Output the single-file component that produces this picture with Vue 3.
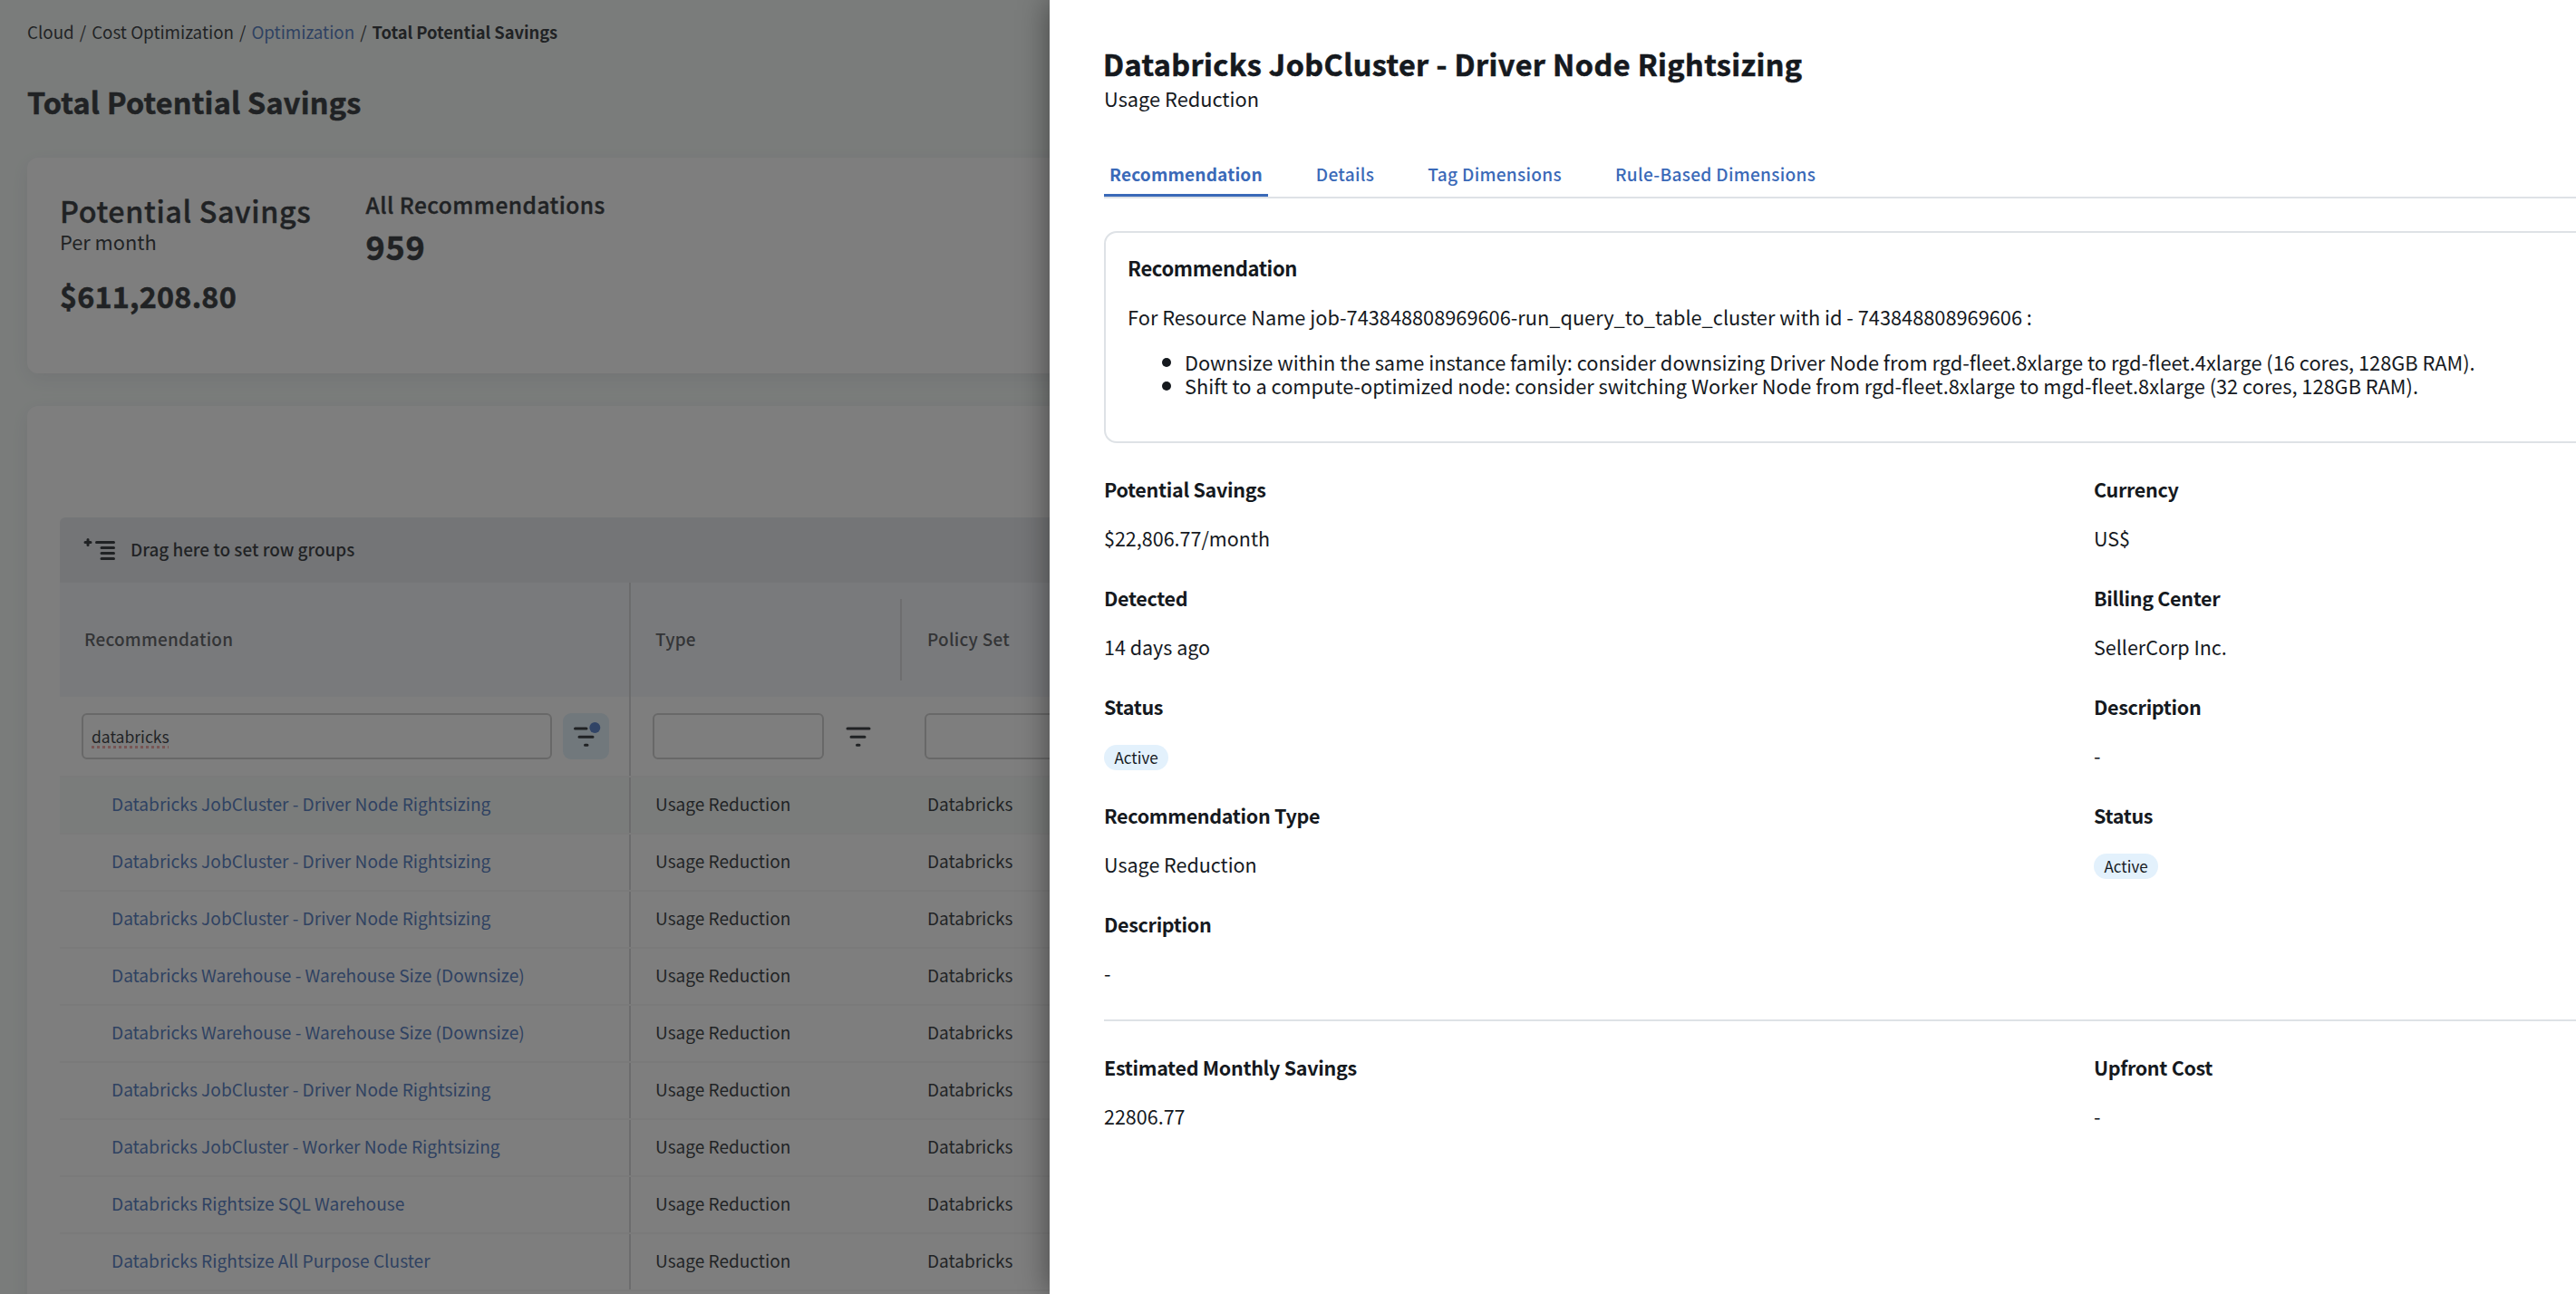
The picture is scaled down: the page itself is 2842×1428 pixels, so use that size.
<template>
  <div class="page">
    <main class="content">
      <nav class="breadcrumb">
        <span>Cloud</span>
        <span>/</span>
        <span>Cost Optimization</span>
        <span>/</span>
        <a class="link">Optimization</a>
        <span>/</span>
        <strong>Total Potential Savings</strong>
      </nav>
      <h1>Total Potential Savings</h1>

      <section class="card summary">
        <div class="summary-main">
          <h2>Potential Savings</h2>
          <p class="period">Per month</p>
          <p class="amount">$611,208.80</p>
        </div>
        <div class="summary-count">
          <h3>All Recommendations</h3>
          <p class="count">959</p>
        </div>
      </section>

      <section class="card table-card">
        <div class="grid">
          <div class="group-bar">
            <svg width="37" height="26" viewBox="0 0 37 26">
              <path d="M2 5.4h6M5 2.4v6M14.5 5.4h19M20 11.4h13.5M20 17.4h13.5M20 23.4h13.5" />
            </svg>
            <span>Drag here to set row groups</span>
          </div>

          <div class="grid-row header-row">
            <div class="col-name"><span>Recommendation</span></div>
            <div class="col-type"><span>Type</span></div>
            <div class="col-policy"><span>Policy Set</span></div>
          </div>

          <div class="grid-row filter-row">
            <div v-for="f in filters" :key="f.col" :class="f.col">
              <div class="filter-input"><span v-if="f.value">{{ f.value }}</span></div>
              <div class="filter-btn" :class="{ active: f.value }">
                <svg width="51" height="51" viewBox="0 0 51 51">
                  <path :d="f.value ? 'M13.5 17h12.5' : 'M14 17h24'" />
                  <path d="M18 26.2h15M24.5 35.2h2.5" />
                  <circle v-if="f.value" cx="35.3" cy="16" r="6" />
                </svg>
              </div>
            </div>
          </div>

          <div
            v-for="(row, i) in rows"
            :key="i"
            class="grid-row data-row"
            :class="{ selected: i === 0 }"
          >
            <div class="col-name"><a class="link">{{ row }}</a></div>
            <div class="col-type"><span>Usage Reduction</span></div>
            <div class="col-policy"><span>Databricks</span></div>
          </div>
        </div>
      </section>
    </main>

    <div class="overlay"></div>

    <aside class="drawer">
      <h2 class="title">Databricks JobCluster - Driver Node Rightsizing</h2>
      <p class="subtitle">Usage Reduction</p>

      <div class="tabs">
        <span v-for="(tab, i) in tabs" :key="tab" class="tab" :class="{ current: i === 0 }">{{ tab }}</span>
      </div>

      <div class="box">
        <h4>Recommendation</h4>
        <p>For Resource Name job-743848808969606-run_query_to_table_cluster with id - 743848808969606 :</p>
        <ul>
          <li><span>Downsize within the same instance family: consider downsizing Driver Node from rgd-fleet.8xlarge to rgd-fleet.4xlarge (16 cores, 128GB RAM).</span></li>
          <li><span>Shift to a compute-optimized node: consider switching Worker Node from rgd-fleet.8xlarge to mgd-fleet.8xlarge (32 cores, 128GB RAM).</span></li>
        </ul>
      </div>

      <div class="fields">
        <div v-for="(f, i) in fields" :key="i" class="field">
          <h5>{{ f.label }}</h5>
          <span v-if="f.label === 'Status'" class="pill">{{ f.value }}</span>
          <p v-else>{{ f.value }}</p>
        </div>
      </div>

      <div class="fields costs">
        <div v-for="f in costs" :key="f.label" class="field">
          <h5>{{ f.label }}</h5>
          <p>{{ f.value }}</p>
        </div>
      </div>
    </aside>
  </div>
</template>

<script setup>
const filters = [
  { col: 'col-name', value: 'databricks' },
  { col: 'col-type', value: '' },
  { col: 'col-policy', value: '' },
];

const rows = [
  'Databricks JobCluster - Driver Node Rightsizing',
  'Databricks JobCluster - Driver Node Rightsizing',
  'Databricks JobCluster - Driver Node Rightsizing',
  'Databricks Warehouse - Warehouse Size (Downsize)',
  'Databricks Warehouse - Warehouse Size (Downsize)',
  'Databricks JobCluster - Driver Node Rightsizing',
  'Databricks JobCluster - Worker Node Rightsizing',
  'Databricks Rightsize SQL Warehouse',
  'Databricks Rightsize All Purpose Cluster',
];

const tabs = ['Recommendation', 'Details', 'Tag Dimensions', 'Rule-Based Dimensions'];

// Two columns, filled row by row
const fields = [
  { label: 'Potential Savings', value: '$22,806.77/month' },
  { label: 'Currency', value: 'US$' },
  { label: 'Detected', value: '14 days ago' },
  { label: 'Billing Center', value: 'SellerCorp Inc.' },
  { label: 'Status', value: 'Active' },
  { label: 'Description', value: '-' },
  { label: 'Recommendation Type', value: 'Usage Reduction' },
  { label: 'Status', value: 'Active' },
  { label: 'Description', value: '-' },
];

const costs = [
  { label: 'Estimated Monthly Savings', value: '22806.77' },
  { label: 'Upfront Cost', value: '-' },
];
</script>

<style>
body {
  margin: 0;
  overflow: hidden;
}
</style>

<style scoped>
.page {
  position: relative;
  height: 1428px;
  overflow: hidden;
  background: #f5fbf8;
  color: #15191e;
  font-family: "Noto Sans CJK SC", "Noto Sans", sans-serif;
  white-space: nowrap;
}
h1, h2, h3, h4, h5, p, ul {
  margin: 0;
  padding: 0;
}
.link {
  color: #3a69b8;
}

/* Page behind the drawer */
.content {
  padding: 21px 30px 0;
}
.breadcrumb {
  display: flex;
  gap: 6px;
  font-size: 18.8px;
  line-height: 28px;
}
.breadcrumb strong {
  font-size: 18.4px;
  letter-spacing: -0.08px;
}
h1 {
  margin-top: 39px;
  font-size: 32.3px;
  line-height: 48px;
  letter-spacing: 0.27px;
}
h1, .amount, .count, .title {
  -webkit-text-stroke: 0.6px currentColor;
}
.card {
  background: #fff;
  border-radius: 12px;
  box-shadow: 0 6px 22px rgba(60, 40, 90, 0.1);
}
.summary {
  display: flex;
  gap: 60px;
  height: 238px;
  margin-top: 38px;
  padding: 0 36px;
  box-sizing: border-box;
}
.summary h2, .summary h3 {
  -webkit-text-stroke: 0.4px currentColor;
}
.summary-main h2 {
  margin-top: 34px;
  font-size: 32.3px;
  font-weight: 500;
  line-height: 48px;
  letter-spacing: 0.62px;
}
.period {
  margin-top: -4px;
  font-size: 21.8px;
  line-height: 30px;
}
.amount {
  margin-top: 20px;
  font-size: 32.3px;
  font-weight: 700;
  line-height: 48px;
  letter-spacing: 0.22px;
}
.summary-count h3 {
  margin-top: 36px;
  font-size: 24.5px;
  font-weight: 500;
  line-height: 32px;
  letter-spacing: 0.47px;
}
.count {
  margin-top: 7px;
  font-size: 36px;
  font-weight: 700;
  line-height: 44px;
  letter-spacing: 0.8px;
}
.table-card {
  height: 1020px;
  margin-top: 36px;
  padding: 123px 36px 0;
}
.grid {
  font-size: 19.1px;
}
.group-bar {
  display: flex;
  gap: 15px;
  height: 72px;
  padding-left: 26px;
  background: #e6e8ed;
  border-radius: 6px 6px 0 0;
  font-size: 18.9px;
  font-weight: 500;
  line-height: 70px;
}
.group-bar svg {
  margin-top: 22px;
}
svg path {
  fill: none;
  stroke: #15191e;
  stroke-width: 3;
  stroke-linecap: round;
}
svg circle {
  fill: #3f6fc4;
}
.grid-row {
  display: flex;
}
.grid-row > div {
  box-sizing: border-box;
}
.col-name {
  width: 630px;
  border-right: 2px solid #d2d3d4;
}
.col-type {
  width: 300px;
}
.col-policy {
  width: 600px;
}
.header-row {
  height: 126px;
  background: #f2f4f9;
  color: #44474c;
  font-size: 18.9px;
  font-weight: 500;
  line-height: 124px;
  letter-spacing: 0.26px;
}
.header-row > div {
  padding-left: 27px;
}
.header-row .col-type {
  background: linear-gradient(#d8d8d9, #d8d8d9) no-repeat right 1px top 18px / 2px 90px;
}
.filter-row {
  height: 87px;
  border-bottom: 2px solid #f4f4f4;
}
.filter-row > div {
  display: flex;
  gap: 12px;
  padding: 18px 24px 0;
}
.filter-row .col-name {
  padding-right: 22px;
}
.filter-input {
  flex: 1;
  height: 51px;
  padding-left: 9px;
  border: 2px solid #c9c9c9;
  border-radius: 6px;
  box-sizing: border-box;
  font-size: 17.5px;
  line-height: 47px;
}
.filter-input span {
  text-decoration: underline dotted #ee9a96 2.5px;
  text-underline-offset: 3px;
}
.filter-btn {
  width: 51px;
  height: 51px;
  border-radius: 9px;
}
.filter-btn.active {
  background: #dff0fb;
}
.data-row {
  height: 61px;
  border-bottom: 2px solid #f6f6f6;
  font-size: 19.05px;
  line-height: 57px;
}
.data-row > div {
  padding-left: 27px;
}
.data-row .col-name {
  padding-left: 57px;
}
.data-row .link {
  font-size: 19.12px;
}
.selected {
  background: #f5fbf8;
}

/* Drawer */
.overlay {
  position: absolute;
  inset: 0;
  background: rgba(40, 40, 40, 0.6);
}
.drawer {
  position: absolute;
  top: 0;
  left: 1158px;
  width: 2304px;
  height: 100%;
  padding: 49px 60px 0;
  box-sizing: border-box;
  background: #fff;
  box-shadow: 0 0 32px rgba(0, 0, 0, 0.45);
  font-size: 21.5px;
  line-height: 30px;
}
.title {
  margin-left: -1px;
  font-size: 32.3px;
  line-height: 43px;
  letter-spacing: 0.44px;
}
.subtitle {
  margin-top: 2px;
  font-size: 21.8px;
}
.tabs {
  display: flex;
  gap: 47px;
  margin-top: 53px;
  border-bottom: 2px solid #dee2e6;
}
.tab {
  padding: 0 6px 7px;
  border-bottom: 3px solid transparent;
  color: #3a69b8;
  font-size: 19.1px;
  font-weight: 500;
  letter-spacing: 0.3px;
}
.tab.current {
  border-color: #3a69b8;
  font-weight: 700;
  letter-spacing: 0.15px;
}
.box {
  height: 234px;
  margin-top: 36px;
  padding: 23px 24px;
  border: 2px solid #dee2e6;
  border-radius: 14px;
  box-sizing: border-box;
  font-size: 21.77px;
}
.box h4 {
  font-size: 22px;
  letter-spacing: -0.36px;
}
.box p {
  margin-top: 25px;
}
.box ul {
  margin-top: 22px;
  padding-left: 38px;
  font-size: 21.8px;
  line-height: 26px;
  list-style: none;
}
.box li {
  display: flex;
  align-items: center;
  gap: 15px;
}
.box li::before {
  content: "";
  width: 10px;
  height: 10px;
  border-radius: 50%;
  background: #15191e;
}
.fields {
  display: grid;
  grid-template-columns: 1092px 1092px;
  row-gap: 36px;
  margin-top: 36px;
}
.field {
  height: 84px;
}
.field h5 {
  margin-bottom: 24px;
  font-size: 21.5px;
  letter-spacing: -0.31px;
}
.pill {
  display: inline-block;
  margin-top: 3px;
  padding: 0 11.5px;
  background: #e3f1fc;
  border-radius: 14px;
  font-size: 17px;
  line-height: 28px;
}
.costs {
  margin-top: 36px;
  padding-top: 36px;
  border-top: 2px solid #dee2e6;
}
</style>
